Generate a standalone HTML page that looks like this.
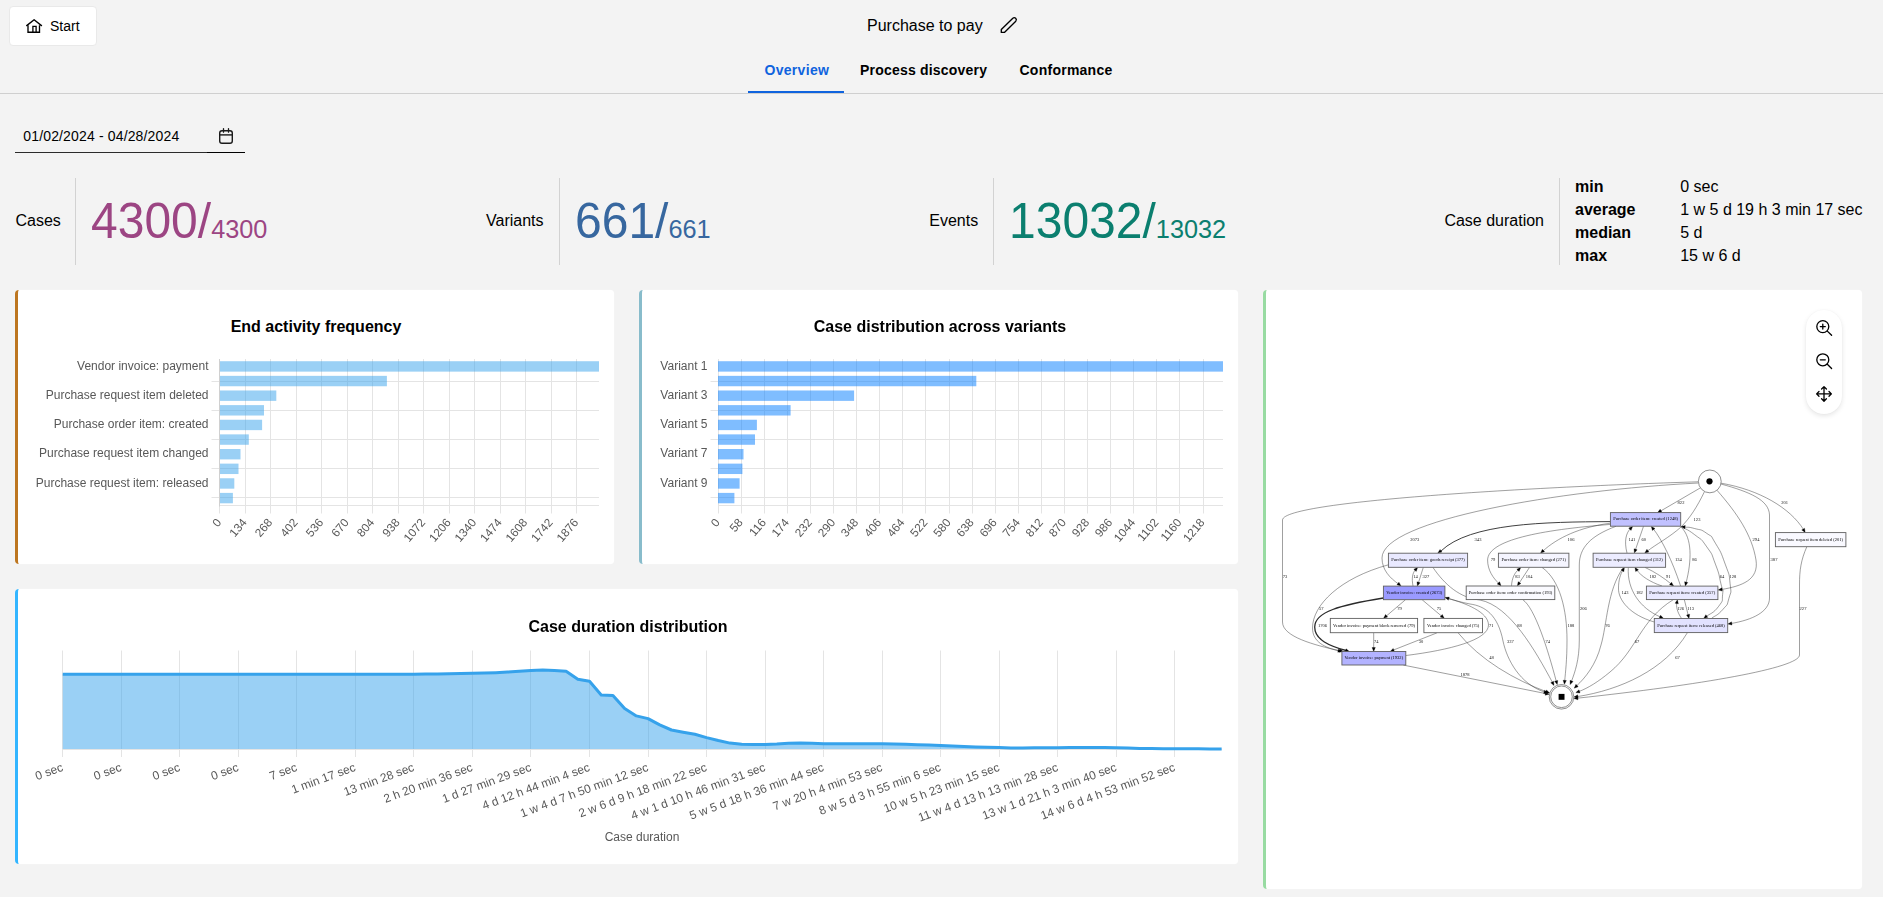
<!DOCTYPE html>
<html lang="en"><head><meta charset="utf-8"><title>Purchase to pay</title><style>
*{box-sizing:border-box;margin:0;padding:0}
html,body{width:1883px;height:897px;overflow:hidden;background:#f3f3f3;font-family:"Liberation Sans",sans-serif;color:#000}
.abs{position:absolute}
.t{position:absolute;white-space:nowrap;line-height:1}
.card{position:absolute;background:#fff;border-radius:4px;border-left:3px solid #000;box-shadow:0 0 1px rgba(255,255,255,.9)}
svg{position:absolute;left:0;top:0;overflow:visible}
.cv{will-change:transform}
svg text{font-family:"Liberation Sans",sans-serif}
svg.gr text{font-family:"Liberation Serif",serif}
</style></head><body>
<div class="abs" style="left:9px;top:6px;width:88px;height:40px;background:#fff;border:1px solid #e9e9e9;border-radius:4px"></div>
<svg width="16" height="16" viewBox="0 0 16 16" style="left:26px;top:18px" fill="none" stroke="#000" stroke-width="1.35" stroke-linecap="round" stroke-linejoin="round"><path d="M0.7 7.6 8.1 1.7 15.5 7.6"/><path d="M2 7.2V14.2H13.5V7.2" stroke-linecap="butt" stroke-linejoin="miter"/><path d="M6.9 14.2V8.4H10.1V14.2" stroke-linecap="butt" stroke-linejoin="miter" stroke-width="1.3"/></svg>
<div class="t" style="left:50px;top:19px;font-size:14px;font-weight:normal;color:#000;">Start</div>
<div class="t" style="left:867px;top:18px;font-size:16px;font-weight:normal;color:#000;">Purchase to pay</div>
<svg width="20" height="20" viewBox="0 0 20 20" style="left:1000px;top:15px" fill="none" stroke="#000" stroke-width="1.35" stroke-linejoin="round"><path d="M1.3 17.4V14.6L12.82 3.22A2.1 2.1 0 0 1 15.78 6.18L4.4 17.4Z"/></svg>
<div class="t" style="left:764.5px;top:63px;font-size:14px;font-weight:bold;color:#0f63de;letter-spacing:0.3px;">Overview</div>
<div class="t" style="left:860px;top:63px;font-size:14px;font-weight:bold;color:#000;letter-spacing:0.2px;">Process discovery</div>
<div class="t" style="left:1019.5px;top:63px;font-size:14px;font-weight:bold;color:#000;letter-spacing:0.25px;">Conformance</div>
<div class="abs" style="left:0;top:93px;width:1883px;height:1px;background:#cfcfcf"></div>
<div class="abs" style="left:748px;top:91px;width:96px;height:2px;background:#0f63de"></div>
<div class="t" style="left:23.3px;top:129px;font-size:14px;font-weight:normal;color:#000;letter-spacing:0.15px;">01/02/2024 - 04/28/2024</div>
<div class="abs" style="left:15px;top:152px;width:192px;height:1px;background:#2b2b2b"></div>
<div class="abs" style="left:207px;top:152px;width:38px;height:1px;background:#000"></div>
<svg width="20" height="20" viewBox="0 0 20 20" style="left:216px;top:126px" fill="none" stroke="#1a1a1a" stroke-width="1.4"><rect x="3.7" y="4.7" width="12.6" height="12.6" rx="2.3"/><path d="M3.7 8.9H16.300"/><path d="M7.500 2.600V6.200M12.500 2.600V6.200" stroke-linecap="round" stroke-width="1.3"/></svg>
<div class="t" style="left:15.5px;top:213px;font-size:16px;font-weight:normal;color:#000;">Cases</div>
<div class="abs" style="left:75px;top:178px;width:1px;height:87px;background:#d2d2d2"></div>
<div class="t" style="left:91px;top:198px;font-size:48px;font-weight:normal;color:#9c4583;transform:scaleY(1.042);transform-origin:0 40px;">4300/<span style="font-size:25.3px">4300</span></div>
<div class="t" style="left:486px;top:213px;font-size:16px;font-weight:normal;color:#000;">Variants</div>
<div class="abs" style="left:559px;top:178px;width:1px;height:87px;background:#d2d2d2"></div>
<div class="t" style="left:575px;top:198px;font-size:48px;font-weight:normal;color:#37679f;transform:scaleY(1.042);transform-origin:0 40px;">661/<span style="font-size:25.3px">661</span></div>
<div class="t" style="left:929.3px;top:213px;font-size:16px;font-weight:normal;color:#000;">Events</div>
<div class="abs" style="left:993px;top:178px;width:1px;height:87px;background:#d2d2d2"></div>
<div class="t" style="left:1009px;top:198px;font-size:48px;font-weight:normal;color:#0b7f6f;transform:scaleY(1.042);transform-origin:0 40px;">13032/<span style="font-size:25.3px">13032</span></div>
<div class="t" style="left:1444.4px;top:213px;font-size:16px;font-weight:normal;color:#000;">Case duration</div>
<div class="abs" style="left:1559px;top:178px;width:1px;height:87px;background:#d2d2d2"></div>
<div class="t" style="left:1575px;top:179px;font-size:16px;font-weight:bold;color:#000;">min</div>
<div class="t" style="left:1680.2px;top:179px;font-size:16px;font-weight:normal;color:#000;">0 sec</div>
<div class="t" style="left:1575px;top:202px;font-size:16px;font-weight:bold;color:#000;">average</div>
<div class="t" style="left:1680.2px;top:202px;font-size:16px;font-weight:normal;color:#000;">1 w 5 d 19 h 3 min 17 sec</div>
<div class="t" style="left:1575px;top:225px;font-size:16px;font-weight:bold;color:#000;">median</div>
<div class="t" style="left:1680.2px;top:225px;font-size:16px;font-weight:normal;color:#000;">5 d</div>
<div class="t" style="left:1575px;top:248px;font-size:16px;font-weight:bold;color:#000;">max</div>
<div class="t" style="left:1680.2px;top:248px;font-size:16px;font-weight:normal;color:#000;">15 w 6 d</div>
<div class="card" style="left:15px;top:290px;width:599px;height:274px;border-left-color:#bd7620"></div>
<div class="card" style="left:639px;top:290px;width:599px;height:274px;border-left-color:#88bccb"></div>
<div class="card" style="left:1263px;top:290px;width:599px;height:599px;border-left-color:#98dba2"></div>
<div class="card" style="left:15px;top:589px;width:1223px;height:275px;border-left-color:#33b5ff"></div>
<div class="t" style="left:316px;top:319px;font-size:16px;font-weight:bold;color:#000;transform:translateX(-50%);">End activity frequency</div>
<svg class="cv" width="1883" height="897" viewBox="0 0 1883 897">
<path d="M219.5 359V513.5M245.5 359V513.5M270.5 359V513.5M296.5 359V513.5M321.5 359V513.5M347.5 359V513.5M372.5 359V513.5M398.5 359V513.5M423.5 359V513.5M449.5 359V513.5M474.5 359V513.5M500.5 359V513.5M525.5 359V513.5M551.5 359V513.5M576.5 359V513.5" stroke="#e4e4e4" stroke-width="1" fill="none"/>
<path d="M211.5 381.5H599M211.5 410.5H599M211.5 439.5H599M211.5 468.5H599M211.5 497.5H599M219 505.5H599" stroke="#e4e4e4" stroke-width="1" fill="none"/>
<path d="M219.5 359V506.5" stroke="#d0d0d0" stroke-width="1" fill="none"/>
<rect x="220" y="361.22" width="379" height="10.4" fill="rgba(54,162,235,0.5)"/>
<rect x="220" y="375.85" width="166.9" height="10.4" fill="rgba(54,162,235,0.5)"/>
<rect x="220" y="390.48" width="56.3" height="10.4" fill="rgba(54,162,235,0.5)"/>
<rect x="220" y="405.11" width="44" height="10.4" fill="rgba(54,162,235,0.5)"/>
<rect x="220" y="419.74" width="42.1" height="10.4" fill="rgba(54,162,235,0.5)"/>
<rect x="220" y="434.37" width="28.8" height="10.4" fill="rgba(54,162,235,0.5)"/>
<rect x="220" y="449" width="20.5" height="10.4" fill="rgba(54,162,235,0.5)"/>
<rect x="220" y="463.63" width="18.5" height="10.4" fill="rgba(54,162,235,0.5)"/>
<rect x="220" y="478.26" width="14.3" height="10.4" fill="rgba(54,162,235,0.5)"/>
<rect x="220" y="492.89" width="12.9" height="10.4" fill="rgba(54,162,235,0.5)"/>
<text x="208.5" y="370.1" text-anchor="end" font-size="12" fill="#585858">Vendor invoice: payment</text>
<text x="208.5" y="398.8" text-anchor="end" font-size="12" fill="#585858">Purchase request item deleted</text>
<text x="208.5" y="427.9" text-anchor="end" font-size="12" fill="#585858">Purchase order item: created</text>
<text x="208.5" y="456.8" text-anchor="end" font-size="12" fill="#585858">Purchase request item changed</text>
<text x="208.5" y="486.5" text-anchor="end" font-size="12" fill="#585858">Purchase request item: released</text>
<text transform="translate(221.9 522.6) rotate(-50)" text-anchor="end" font-size="11.8" fill="#585858">0</text>
<text transform="translate(247.4 522.6) rotate(-50)" text-anchor="end" font-size="11.8" fill="#585858">134</text>
<text transform="translate(272.9 522.6) rotate(-50)" text-anchor="end" font-size="11.8" fill="#585858">268</text>
<text transform="translate(298.4 522.6) rotate(-50)" text-anchor="end" font-size="11.8" fill="#585858">402</text>
<text transform="translate(323.9 522.6) rotate(-50)" text-anchor="end" font-size="11.8" fill="#585858">536</text>
<text transform="translate(349.4 522.6) rotate(-50)" text-anchor="end" font-size="11.8" fill="#585858">670</text>
<text transform="translate(374.9 522.6) rotate(-50)" text-anchor="end" font-size="11.8" fill="#585858">804</text>
<text transform="translate(400.4 522.6) rotate(-50)" text-anchor="end" font-size="11.8" fill="#585858">938</text>
<text transform="translate(425.9 522.6) rotate(-50)" text-anchor="end" font-size="11.8" fill="#585858">1072</text>
<text transform="translate(451.4 522.6) rotate(-50)" text-anchor="end" font-size="11.8" fill="#585858">1206</text>
<text transform="translate(476.9 522.6) rotate(-50)" text-anchor="end" font-size="11.8" fill="#585858">1340</text>
<text transform="translate(502.4 522.6) rotate(-50)" text-anchor="end" font-size="11.8" fill="#585858">1474</text>
<text transform="translate(527.9 522.6) rotate(-50)" text-anchor="end" font-size="11.8" fill="#585858">1608</text>
<text transform="translate(553.4 522.6) rotate(-50)" text-anchor="end" font-size="11.8" fill="#585858">1742</text>
<text transform="translate(578.9 522.6) rotate(-50)" text-anchor="end" font-size="11.8" fill="#585858">1876</text>
</svg>
<div class="t" style="left:940px;top:319px;font-size:16px;font-weight:bold;color:#000;transform:translateX(-50%);">Case distribution across variants</div>
<svg class="cv" width="1883" height="897" viewBox="0 0 1883 897">
<path d="M718.5 359V513.5M741.5 359V513.5M764.5 359V513.5M787.5 359V513.5M810.5 359V513.5M833.5 359V513.5M856.5 359V513.5M879.5 359V513.5M902.5 359V513.5M925.5 359V513.5M949.5 359V513.5M972.5 359V513.5M995.5 359V513.5M1018.5 359V513.5M1041.5 359V513.5M1064.5 359V513.5M1087.5 359V513.5M1110.5 359V513.5M1133.5 359V513.5M1156.5 359V513.5M1179.5 359V513.5M1203.5 359V513.5" stroke="#e4e4e4" stroke-width="1" fill="none"/>
<path d="M710.5 381.5H1223M710.5 410.5H1223M710.5 439.5H1223M710.5 468.5H1223M710.5 497.5H1223M718 505.5H1223" stroke="#e4e4e4" stroke-width="1" fill="none"/>
<path d="M718.5 359V506.5" stroke="#e4e4e4" stroke-width="1" fill="none"/>
<rect x="718" y="361.22" width="505" height="10.4" fill="rgba(0,123,255,0.5)"/>
<rect x="718" y="375.85" width="258.3" height="10.4" fill="rgba(0,123,255,0.5)"/>
<rect x="718" y="390.48" width="136.1" height="10.4" fill="rgba(0,123,255,0.5)"/>
<rect x="718" y="405.11" width="72.6" height="10.4" fill="rgba(0,123,255,0.5)"/>
<rect x="718" y="419.74" width="38.9" height="10.4" fill="rgba(0,123,255,0.5)"/>
<rect x="718" y="434.37" width="37" height="10.4" fill="rgba(0,123,255,0.5)"/>
<rect x="718" y="449" width="25.5" height="10.4" fill="rgba(0,123,255,0.5)"/>
<rect x="718" y="463.63" width="24.4" height="10.4" fill="rgba(0,123,255,0.5)"/>
<rect x="718" y="478.26" width="21.6" height="10.4" fill="rgba(0,123,255,0.5)"/>
<rect x="718" y="492.89" width="16.4" height="10.4" fill="rgba(0,123,255,0.5)"/>
<text x="707.5" y="370.1" text-anchor="end" font-size="12" fill="#585858">Variant 1</text>
<text x="707.5" y="398.8" text-anchor="end" font-size="12" fill="#585858">Variant 3</text>
<text x="707.5" y="427.9" text-anchor="end" font-size="12" fill="#585858">Variant 5</text>
<text x="707.5" y="456.8" text-anchor="end" font-size="12" fill="#585858">Variant 7</text>
<text x="707.5" y="486.5" text-anchor="end" font-size="12" fill="#585858">Variant 9</text>
<text transform="translate(720.45 522.6) rotate(-50)" text-anchor="end" font-size="11.8" fill="#585858">0</text>
<text transform="translate(743.54 522.6) rotate(-50)" text-anchor="end" font-size="11.8" fill="#585858">58</text>
<text transform="translate(766.63 522.6) rotate(-50)" text-anchor="end" font-size="11.8" fill="#585858">116</text>
<text transform="translate(789.72 522.6) rotate(-50)" text-anchor="end" font-size="11.8" fill="#585858">174</text>
<text transform="translate(812.81 522.6) rotate(-50)" text-anchor="end" font-size="11.8" fill="#585858">232</text>
<text transform="translate(835.9 522.6) rotate(-50)" text-anchor="end" font-size="11.8" fill="#585858">290</text>
<text transform="translate(858.99 522.6) rotate(-50)" text-anchor="end" font-size="11.8" fill="#585858">348</text>
<text transform="translate(882.08 522.6) rotate(-50)" text-anchor="end" font-size="11.8" fill="#585858">406</text>
<text transform="translate(905.17 522.6) rotate(-50)" text-anchor="end" font-size="11.8" fill="#585858">464</text>
<text transform="translate(928.26 522.6) rotate(-50)" text-anchor="end" font-size="11.8" fill="#585858">522</text>
<text transform="translate(951.35 522.6) rotate(-50)" text-anchor="end" font-size="11.8" fill="#585858">580</text>
<text transform="translate(974.44 522.6) rotate(-50)" text-anchor="end" font-size="11.8" fill="#585858">638</text>
<text transform="translate(997.53 522.6) rotate(-50)" text-anchor="end" font-size="11.8" fill="#585858">696</text>
<text transform="translate(1020.62 522.6) rotate(-50)" text-anchor="end" font-size="11.8" fill="#585858">754</text>
<text transform="translate(1043.71 522.6) rotate(-50)" text-anchor="end" font-size="11.8" fill="#585858">812</text>
<text transform="translate(1066.8 522.6) rotate(-50)" text-anchor="end" font-size="11.8" fill="#585858">870</text>
<text transform="translate(1089.89 522.6) rotate(-50)" text-anchor="end" font-size="11.8" fill="#585858">928</text>
<text transform="translate(1112.98 522.6) rotate(-50)" text-anchor="end" font-size="11.8" fill="#585858">986</text>
<text transform="translate(1136.07 522.6) rotate(-50)" text-anchor="end" font-size="11.8" fill="#585858">1044</text>
<text transform="translate(1159.16 522.6) rotate(-50)" text-anchor="end" font-size="11.8" fill="#585858">1102</text>
<text transform="translate(1182.25 522.6) rotate(-50)" text-anchor="end" font-size="11.8" fill="#585858">1160</text>
<text transform="translate(1205.34 522.6) rotate(-50)" text-anchor="end" font-size="11.8" fill="#585858">1218</text>
</svg>
<div class="t" style="left:628px;top:619px;font-size:16px;font-weight:bold;color:#000;transform:translateX(-50%);">Case duration distribution</div>
<svg class="cv" width="1883" height="897" viewBox="0 0 1883 897">
<path d="M62.5 650.5V757M121.5 650.5V757M179.5 650.5V757M238.5 650.5V757M296.5 650.5V757M355.5 650.5V757M413.5 650.5V757M472.5 650.5V757M530.5 650.5V757M589.5 650.5V757M648.5 650.5V757M706.5 650.5V757M765.5 650.5V757M823.5 650.5V757M882.5 650.5V757M940.5 650.5V757M999.5 650.5V757M1057.5 650.5V757M1116.5 650.5V757M1174.5 650.5V757" stroke="#e4e4e4" stroke-width="1" fill="none"/>
<path d="M62 749.5H1221.65" stroke="#e4e4e4" stroke-width="1" fill="none"/>
<path d="M62.75 674.3 L74.46 674.3 L86.16 674.3 L97.87 674.3 L109.57 674.3 L121.28 674.3 L132.99 674.3 L144.69 674.3 L156.4 674.3 L168.1 674.3 L179.81 674.3 L191.52 674.3 L203.22 674.3 L214.93 674.3 L226.63 674.3 L238.34 674.3 L250.05 674.3 L261.75 674.3 L273.46 674.3 L285.17 674.3 L296.87 674.3 L308.58 674.3 L320.28 674.3 L331.99 674.3 L343.7 674.3 L355.4 674.3 L367.11 674.3 L378.81 674.3 L390.52 674.3 L402.23 674.3 L413.93 674.2 L425.64 674.1 L437.34 674 L449.05 673.8 L460.76 673.6 L472.46 673.3 L484.17 673.1 L495.87 672.7 L507.58 672.05 L519.29 671.3 L530.99 670.4 L542.7 669.9 L554.4 670.5 L566.11 671.3 L577.82 679.3 L589.52 681.2 L601.23 695 L612.93 695.4 L624.64 708.6 L636.35 715.9 L648.05 718.6 L659.76 724.9 L671.47 730 L683.17 732.2 L694.88 734.2 L706.58 737.6 L718.29 740.5 L730 743.1 L741.7 744.2 L753.41 744.4 L765.11 744.5 L776.82 744 L788.53 743.2 L800.23 743 L811.94 743.3 L823.64 743.7 L835.35 743.8 L847.06 743.8 L858.76 743.75 L870.47 743.7 L882.17 743.7 L893.88 744 L905.59 744.3 L917.29 744.7 L929 745.1 L940.7 745.5 L952.41 746 L964.12 746.5 L975.82 747 L987.53 747.3 L999.23 747.6 L1010.94 747.9 L1022.65 747.9 L1034.35 747.85 L1046.06 747.8 L1057.77 747.75 L1069.47 747.55 L1081.18 747.4 L1092.88 747.4 L1104.59 747.5 L1116.3 747.75 L1128 748.1 L1139.71 748.45 L1151.41 748.6 L1163.12 748.65 L1174.83 748.7 L1186.53 748.8 L1198.24 748.85 L1209.94 748.9 L1221.65 748.9 L1221.65 749 L62.75 749 Z" fill="rgba(54,162,235,0.5)" stroke="none"/>
<path d="M62.75 674.3 L74.46 674.3 L86.16 674.3 L97.87 674.3 L109.57 674.3 L121.28 674.3 L132.99 674.3 L144.69 674.3 L156.4 674.3 L168.1 674.3 L179.81 674.3 L191.52 674.3 L203.22 674.3 L214.93 674.3 L226.63 674.3 L238.34 674.3 L250.05 674.3 L261.75 674.3 L273.46 674.3 L285.17 674.3 L296.87 674.3 L308.58 674.3 L320.28 674.3 L331.99 674.3 L343.7 674.3 L355.4 674.3 L367.11 674.3 L378.81 674.3 L390.52 674.3 L402.23 674.3 L413.93 674.2 L425.64 674.1 L437.34 674 L449.05 673.8 L460.76 673.6 L472.46 673.3 L484.17 673.1 L495.87 672.7 L507.58 672.05 L519.29 671.3 L530.99 670.4 L542.7 669.9 L554.4 670.5 L566.11 671.3 L577.82 679.3 L589.52 681.2 L601.23 695 L612.93 695.4 L624.64 708.6 L636.35 715.9 L648.05 718.6 L659.76 724.9 L671.47 730 L683.17 732.2 L694.88 734.2 L706.58 737.6 L718.29 740.5 L730 743.1 L741.7 744.2 L753.41 744.4 L765.11 744.5 L776.82 744 L788.53 743.2 L800.23 743 L811.94 743.3 L823.64 743.7 L835.35 743.8 L847.06 743.8 L858.76 743.75 L870.47 743.7 L882.17 743.7 L893.88 744 L905.59 744.3 L917.29 744.7 L929 745.1 L940.7 745.5 L952.41 746 L964.12 746.5 L975.82 747 L987.53 747.3 L999.23 747.6 L1010.94 747.9 L1022.65 747.9 L1034.35 747.85 L1046.06 747.8 L1057.77 747.75 L1069.47 747.55 L1081.18 747.4 L1092.88 747.4 L1104.59 747.5 L1116.3 747.75 L1128 748.1 L1139.71 748.45 L1151.41 748.6 L1163.12 748.65 L1174.83 748.7 L1186.53 748.8 L1198.24 748.85 L1209.94 748.9 L1221.65 748.9" fill="none" stroke="#36a2eb" stroke-width="3" stroke-linejoin="round" stroke-linecap="butt"/>
<text transform="translate(63.75 770.4) rotate(-20.3)" text-anchor="end" font-size="11.9" fill="#585858">0 sec</text>
<text transform="translate(122.28 770.4) rotate(-20.3)" text-anchor="end" font-size="11.9" fill="#585858">0 sec</text>
<text transform="translate(180.81 770.4) rotate(-20.3)" text-anchor="end" font-size="11.9" fill="#585858">0 sec</text>
<text transform="translate(239.34 770.4) rotate(-20.3)" text-anchor="end" font-size="11.9" fill="#585858">0 sec</text>
<text transform="translate(297.87 770.4) rotate(-20.3)" text-anchor="end" font-size="11.9" fill="#585858">7 sec</text>
<text transform="translate(356.4 770.4) rotate(-20.3)" text-anchor="end" font-size="11.9" fill="#585858">1 min 17 sec</text>
<text transform="translate(414.93 770.4) rotate(-20.3)" text-anchor="end" font-size="11.9" fill="#585858">13 min 28 sec</text>
<text transform="translate(473.46 770.4) rotate(-20.3)" text-anchor="end" font-size="11.9" fill="#585858">2 h 20 min 36 sec</text>
<text transform="translate(531.99 770.4) rotate(-20.3)" text-anchor="end" font-size="11.9" fill="#585858">1 d 27 min 29 sec</text>
<text transform="translate(590.52 770.4) rotate(-20.3)" text-anchor="end" font-size="11.9" fill="#585858">4 d 12 h 44 min 4 sec</text>
<text transform="translate(649.05 770.4) rotate(-20.3)" text-anchor="end" font-size="11.9" fill="#585858">1 w 4 d 7 h 50 min 12 sec</text>
<text transform="translate(707.58 770.4) rotate(-20.3)" text-anchor="end" font-size="11.9" fill="#585858">2 w 6 d 9 h 18 min 22 sec</text>
<text transform="translate(766.11 770.4) rotate(-20.3)" text-anchor="end" font-size="11.9" fill="#585858">4 w 1 d 10 h 46 min 31 sec</text>
<text transform="translate(824.64 770.4) rotate(-20.3)" text-anchor="end" font-size="11.9" fill="#585858">5 w 5 d 18 h 36 min 44 sec</text>
<text transform="translate(883.17 770.4) rotate(-20.3)" text-anchor="end" font-size="11.9" fill="#585858">7 w 20 h 4 min 53 sec</text>
<text transform="translate(941.7 770.4) rotate(-20.3)" text-anchor="end" font-size="11.9" fill="#585858">8 w 5 d 3 h 55 min 6 sec</text>
<text transform="translate(1000.23 770.4) rotate(-20.3)" text-anchor="end" font-size="11.9" fill="#585858">10 w 5 h 23 min 15 sec</text>
<text transform="translate(1058.77 770.4) rotate(-20.3)" text-anchor="end" font-size="11.9" fill="#585858">11 w 4 d 13 h 13 min 28 sec</text>
<text transform="translate(1117.3 770.4) rotate(-20.3)" text-anchor="end" font-size="11.9" fill="#585858">13 w 1 d 21 h 3 min 40 sec</text>
<text transform="translate(1175.83 770.4) rotate(-20.3)" text-anchor="end" font-size="11.9" fill="#585858">14 w 6 d 4 h 53 min 52 sec</text>
<text x="642" y="841" text-anchor="middle" font-size="12" fill="#585858">Case duration</text>
</svg>
<svg class="cv gr" width="1883" height="897" viewBox="0 0 1883 897">
<path d="M1700.5 487.8 L1661 510.8" fill="none" stroke="#2a2a2a" stroke-width="0.45"/>
<path d="M1704.5 491.6 C1697 507 1690 518 1681 527 C1670 537 1655 545 1647.5 551" fill="none" stroke="#2a2a2a" stroke-width="0.45"/>
<path d="M1717 490.3 C1737 513 1752 535 1756 560 C1759 580 1742 586 1721.5 589.5" fill="none" stroke="#2a2a2a" stroke-width="0.45"/>
<path d="M1721 484 C1750 492 1769 500 1769.5 515 L1769.5 598 C1769.500 612 1752 620 1731 623.500" fill="none" stroke="#2a2a2a" stroke-width="0.45"/>
<path d="M1721.2 483.2 C1760 490 1790 508 1803.5 529.5" fill="none" stroke="#2a2a2a" stroke-width="0.45"/>
<path d="M1698.4 483 C1560 490 1382 520 1382 558 C1382 570 1390 578 1398.5 584" fill="none" stroke="#2a2a2a" stroke-width="0.45"/>
<path d="M1698.3 481.8 C1560 486 1282.5 500 1282.5 520 L1282.5 622 C1282.500 637 1315 645 1338.500 650.600" fill="none" stroke="#2a2a2a" stroke-width="0.45"/>
<path d="M1610.4 521.6 C1545 522 1470 523 1441 551" fill="none" stroke="#2a2a2a" stroke-width="0.9"/>
<path d="M1610.4 523.2 C1580 527 1557 538 1543 551" fill="none" stroke="#2a2a2a" stroke-width="0.45"/>
<path d="M1610.4 524.4 C1540 530 1488 540 1487.6 560 C1487.600 570 1493 578 1499 583.600" fill="none" stroke="#2a2a2a" stroke-width="0.45"/>
<path d="M1616 526.3 C1590 536 1579.300 548 1579.300 565 L1579.300 640 C1579.300 660 1575 672 1571.400 681.500" fill="none" stroke="#2a2a2a" stroke-width="0.45"/>
<path d="M1627 553.1 C1624 541 1626 533 1630.5 528.6" fill="none" stroke="#2a2a2a" stroke-width="0.45"/>
<path d="M1643.5 526.3 L1635.3 550.2" fill="none" stroke="#2a2a2a" stroke-width="0.45"/>
<path d="M1680.6 586 C1672 560 1662 540 1653.3 528.8" fill="none" stroke="#2a2a2a" stroke-width="0.45"/>
<path d="M1681.5 527.5 C1692 538 1692 560 1686 583" fill="none" stroke="#2a2a2a" stroke-width="0.45"/>
<path d="M1680.6 526.7 C1685.23 529.33 1685.77 527.87 1694.5 534.6 C1703.23 541.33 1699.83 537.07 1706.8 546.9 C1713.77 556.73 1710.7 551.83 1715.4 564.1 C1720.1 576.37 1718.5 573.57 1720.9 583.7 C1723.3 593.83 1723.4 586.9 1722.6 594.5 C1721.8 602.1 1723.97 599.13 1718.5 606.5 C1713.03 613.87 1710.3 613.23 1706.2 616.6" fill="none" stroke="#2a2a2a" stroke-width="0.45"/>
<path d="M1711.7 618.2 C1715.4 615.3 1717.07 616.1 1722.8 609.5 C1728.53 602.9 1726.47 607 1728.9 598.4 C1731.33 589.8 1731.33 595.13 1730.1 583.7 C1728.87 572.27 1730.1 577.6 1725.2 564.1 C1720.3 550.6 1721.53 553.43 1715.4 543.2 C1709.27 532.97 1713.77 538.3 1706.8 533.4 C1699.83 528.5 1701.93 530.57 1694.5 528.5 C1687.07 526.43 1687.83 527.63 1684.5 527.2" fill="none" stroke="#2a2a2a" stroke-width="0.45"/>
<path d="M1413 586 C1411.500 578 1412.500 573 1415.600 569.500" fill="none" stroke="#2a2a2a" stroke-width="0.45"/>
<path d="M1423.3 567.4 L1418.3 583.2" fill="none" stroke="#2a2a2a" stroke-width="0.45"/>
<path d="M1388.4 564.8 C1340 578 1312.5 605 1312.5 628 C1312.500 642 1325 648 1340 650.900" fill="none" stroke="#2a2a2a" stroke-width="0.45"/>
<path d="M1432.9 567.4 C1445 585 1460 598 1480 600 C1510 606 1535 650 1552.500 682.500" fill="none" stroke="#2a2a2a" stroke-width="0.45"/>
<path d="M1511.5 585.800 C1512 578 1514.500 573 1518.500 569.600" fill="none" stroke="#2a2a2a" stroke-width="0.45"/>
<path d="M1529.5 567.400 L1519 583.300" fill="none" stroke="#2a2a2a" stroke-width="0.45"/>
<path d="M1542 567.400 C1560 580 1567 610 1567 640 C1567 660 1565.500 672 1564.700 681" fill="none" stroke="#2a2a2a" stroke-width="0.45"/>
<path d="M1522.700 599.600 C1535 608 1548 650 1556.300 681.400" fill="none" stroke="#2a2a2a" stroke-width="0.45"/>
<path d="M1383.4 598 C1340 605 1314.700 612 1314.700 627 C1314.700 640 1330 646 1346 650.500" fill="none" stroke="#2a2a2a" stroke-width="1.3"/>
<path d="M1405.4 599.8 L1386 616.3" fill="none" stroke="#2a2a2a" stroke-width="0.45"/>
<path d="M1422.2 599.8 L1441.8 616.3" fill="none" stroke="#2a2a2a" stroke-width="0.45"/>
<path d="M1544.5 692 C1520 684 1507 660 1503 641 C1498 615 1485 606 1470 604 C1462 602.500 1453 600 1445 597.400" fill="none" stroke="#2a2a2a" stroke-width="0.45"/>
<path d="M1373.7 632.9 L1373.7 648.4" fill="none" stroke="#2a2a2a" stroke-width="0.45"/>
<path d="M1436.9 632.9 L1393 650.2" fill="none" stroke="#2a2a2a" stroke-width="0.45"/>
<path d="M1458 632.700 C1480 660 1515 680 1546.600 691.800" fill="none" stroke="#2a2a2a" stroke-width="0.45"/>
<path d="M1403.4 665.1 L1545.8 693.6" fill="none" stroke="#2a2a2a" stroke-width="0.45"/>
<path d="M1406 655.500 C1450 650 1488.500 640 1488.500 625 C1488.500 612 1465 603 1448.300 598.500" fill="none" stroke="#2a2a2a" stroke-width="0.45"/>
<path d="M1662 586 C1650 582 1641 576 1636.600 569.800" fill="none" stroke="#2a2a2a" stroke-width="0.45"/>
<path d="M1645 567.400 C1655 572 1664 578 1671.200 584" fill="none" stroke="#2a2a2a" stroke-width="0.45"/>
<path d="M1654.300 622 C1630 615 1618 600 1618.500 588 C1618.500 580 1620.500 574 1623 570" fill="none" stroke="#2a2a2a" stroke-width="0.45"/>
<path d="M1628.300 567.400 C1627 590 1640 608 1660 616.800" fill="none" stroke="#2a2a2a" stroke-width="0.45"/>
<path d="M1623.400 567.500 C1607 590 1607 625 1601 645 C1596 665 1585 678 1576.500 686" fill="none" stroke="#2a2a2a" stroke-width="0.45"/>
<path d="M1681.500 618.400 C1677 612 1676 606 1676.800 602.500" fill="none" stroke="#2a2a2a" stroke-width="0.45"/>
<path d="M1684.300 599.600 L1688.300 615.500" fill="none" stroke="#2a2a2a" stroke-width="0.45"/>
<path d="M1673.400 599.600 C1640 620 1637 650 1610 672 C1598 682 1588 688 1579 691.500" fill="none" stroke="#2a2a2a" stroke-width="0.45"/>
<path d="M1687.400 632.700 C1665 670 1620 690 1577.300 696.600" fill="none" stroke="#2a2a2a" stroke-width="0.45"/>
<path d="M1806.800 546.800 C1801 560 1799.500 570 1799.500 585 L1799.500 655 C1799.500 668 1700 685 1577.300 698.200" fill="none" stroke="#2a2a2a" stroke-width="0.45"/>
<path d="M1657.6 512.6L1660.15 509.22L1661.8 512.08ZM1644.8 553L1646.92 549.34L1648.91 551.97ZM1718.2 590L1721.83 587.82L1722.29 591.09ZM1727.9 624L1731.53 621.82L1731.99 625.09ZM1805.2 532.4L1801.73 529.97L1804.53 528.22ZM1401 585.9L1396.91 584.8L1398.94 582.2ZM1341.9 651.4L1337.73 652.13L1338.47 648.91ZM1437.8 553L1440.05 549.41L1441.94 552.11ZM1540.6 553.1L1542.39 549.26L1544.6 551.72ZM1501 585.8L1497.16 584.01L1499.62 581.8ZM1570.2 684.6L1569.98 680.37L1573.08 681.5ZM1632.6 526.5L1631.01 530.42L1628.68 528.09ZM1634.4 553L1634.04 548.78L1637.17 549.8ZM1651.3 526.4L1655 528.46L1652.4 530.49ZM1685.3 585.9L1684.57 581.73L1687.79 582.47ZM1703.7 618.4L1705.82 614.74L1707.81 617.37ZM1681.2 526.6L1685.29 525.51L1684.83 528.78ZM1417.6 567.5L1416.22 571.5L1413.76 569.29ZM1417.4 586L1416.96 581.79L1420.12 582.75ZM1343.4 651.5L1339.24 652.3L1339.93 649.08ZM1554 685.5L1550.71 682.83L1553.63 681.28ZM1520.7 567.6L1519.11 571.52L1516.78 569.19ZM1517.4 585.8L1518.14 581.63L1520.91 583.43ZM1564.4 684.3L1563.1 680.27L1566.38 680.56ZM1557.2 684.6L1554.6 681.26L1557.78 680.41ZM1349.4 651.5L1345.2 652.01L1346.11 648.84ZM1383.6 618.2L1385.53 614.43L1387.65 616.96ZM1444.2 618.2L1440.15 616.96L1442.27 614.43ZM1547.8 693.1L1543.58 693.46L1544.6 690.33ZM1373.7 651.4L1372.05 647.5L1375.35 647.5ZM1390.2 651.4L1393.2 648.41L1394.43 651.47ZM1549.6 692.9L1545.37 693.12L1546.5 690.02ZM1549.2 694.3L1545.06 695.18L1545.69 691.94ZM1445.1 597.5L1449.31 597.06L1448.35 600.22ZM1635 567.4L1638.47 569.83L1635.67 571.58ZM1673.6 585.9L1669.51 584.8L1671.54 582.2ZM1624.4 567.5L1623.88 571.7L1621.02 570.05ZM1663.4 618.3L1659.17 618.15L1660.56 615.16ZM1574.2 688.2L1575.93 684.33L1578.18 686.75ZM1677.4 599.7L1678.35 603.83L1675.1 603.25ZM1689 618.4L1686.46 615.02L1689.66 614.22ZM1575.8 692.6L1579 689.83L1580.02 692.96ZM1574 697L1577.63 694.82L1578.09 698.09ZM1574 698.6L1577.71 696.55L1578.05 699.83Z" fill="#000" stroke="#000" stroke-width="0.3"/>
<text transform="translate(1681 503.8) scale(.1)" text-anchor="middle" font-size="45.3" fill="#111">822</text>
<text transform="translate(1697 520.6) scale(.1)" text-anchor="middle" font-size="45.3" fill="#111">123</text>
<text transform="translate(1756 540.9) scale(.1)" text-anchor="middle" font-size="45.3" fill="#111">294</text>
<text transform="translate(1774 561) scale(.1)" text-anchor="middle" font-size="45.3" fill="#111">387</text>
<text transform="translate(1784.7 503.8) scale(.1)" text-anchor="middle" font-size="45.3" fill="#111">201</text>
<text transform="translate(1414.8 540.9) scale(.1)" text-anchor="middle" font-size="45.3" fill="#111">2073</text>
<text transform="translate(1285 577.7) scale(.1)" text-anchor="middle" font-size="45.3" fill="#111">73</text>
<text transform="translate(1478 540.9) scale(.1)" text-anchor="middle" font-size="45.3" fill="#111">343</text>
<text transform="translate(1571 540.9) scale(.1)" text-anchor="middle" font-size="45.3" fill="#111">106</text>
<text transform="translate(1493 561.4) scale(.1)" text-anchor="middle" font-size="45.3" fill="#111">79</text>
<text transform="translate(1583.3 609.6) scale(.1)" text-anchor="middle" font-size="45.3" fill="#111">206</text>
<text transform="translate(1631.8 540.9) scale(.1)" text-anchor="middle" font-size="45.3" fill="#111">141</text>
<text transform="translate(1643.8 540.9) scale(.1)" text-anchor="middle" font-size="45.3" fill="#111">60</text>
<text transform="translate(1678.4 561.4) scale(.1)" text-anchor="middle" font-size="45.3" fill="#111">134</text>
<text transform="translate(1694.4 561.4) scale(.1)" text-anchor="middle" font-size="45.3" fill="#111">86</text>
<text transform="translate(1721.9 577.7) scale(.1)" text-anchor="middle" font-size="45.3" fill="#111">64</text>
<text transform="translate(1732.8 577.7) scale(.1)" text-anchor="middle" font-size="45.3" fill="#111">128</text>
<text transform="translate(1415.4 577.7) scale(.1)" text-anchor="middle" font-size="45.3" fill="#111">14</text>
<text transform="translate(1425.8 577.7) scale(.1)" text-anchor="middle" font-size="45.3" fill="#111">327</text>
<text transform="translate(1321.2 609.6) scale(.1)" text-anchor="middle" font-size="45.3" fill="#111">57</text>
<text transform="translate(1519.6 626.7) scale(.1)" text-anchor="middle" font-size="45.3" fill="#111">88</text>
<text transform="translate(1517.5 577.7) scale(.1)" text-anchor="middle" font-size="45.3" fill="#111">83</text>
<text transform="translate(1529.2 577.7) scale(.1)" text-anchor="middle" font-size="45.3" fill="#111">104</text>
<text transform="translate(1570.8 626.7) scale(.1)" text-anchor="middle" font-size="45.3" fill="#111">188</text>
<text transform="translate(1547.7 643) scale(.1)" text-anchor="middle" font-size="45.3" fill="#111">74</text>
<text transform="translate(1322.5 626.7) scale(.1)" text-anchor="middle" font-size="45.3" fill="#111">1706</text>
<text transform="translate(1399.4 609.6) scale(.1)" text-anchor="middle" font-size="45.3" fill="#111">79</text>
<text transform="translate(1438.9 609.6) scale(.1)" text-anchor="middle" font-size="45.3" fill="#111">75</text>
<text transform="translate(1510.3 643) scale(.1)" text-anchor="middle" font-size="45.3" fill="#111">337</text>
<text transform="translate(1376.3 643) scale(.1)" text-anchor="middle" font-size="45.3" fill="#111">74</text>
<text transform="translate(1421 643) scale(.1)" text-anchor="middle" font-size="45.3" fill="#111">30</text>
<text transform="translate(1491.5 658.6) scale(.1)" text-anchor="middle" font-size="45.3" fill="#111">48</text>
<text transform="translate(1465 675.8) scale(.1)" text-anchor="middle" font-size="45.3" fill="#111">1878</text>
<text transform="translate(1491.2 626.7) scale(.1)" text-anchor="middle" font-size="45.3" fill="#111">71</text>
<text transform="translate(1652.8 577.7) scale(.1)" text-anchor="middle" font-size="45.3" fill="#111">182</text>
<text transform="translate(1668.2 577.7) scale(.1)" text-anchor="middle" font-size="45.3" fill="#111">91</text>
<text transform="translate(1625 593.8) scale(.1)" text-anchor="middle" font-size="45.3" fill="#111">143</text>
<text transform="translate(1639.3 593.8) scale(.1)" text-anchor="middle" font-size="45.3" fill="#111">182</text>
<text transform="translate(1607.4 626.7) scale(.1)" text-anchor="middle" font-size="45.3" fill="#111">76</text>
<text transform="translate(1680.7 609.6) scale(.1)" text-anchor="middle" font-size="45.3" fill="#111">126</text>
<text transform="translate(1690.6 609.6) scale(.1)" text-anchor="middle" font-size="45.3" fill="#111">113</text>
<text transform="translate(1637 643) scale(.1)" text-anchor="middle" font-size="45.3" fill="#111">67</text>
<text transform="translate(1677.6 658.9) scale(.1)" text-anchor="middle" font-size="45.3" fill="#111">67</text>
<text transform="translate(1803 609.6) scale(.1)" text-anchor="middle" font-size="45.3" fill="#111">227</text>
<rect x="1610.4" y="512.6" width="70.3" height="13.6" fill="#c1c1ff" stroke="#606060" stroke-width="0.9"/>
<text transform="translate(1645.55 520.45) scale(.1)" text-anchor="middle" font-size="45.3" fill="#000">Purchase order item: created (1248)</text>
<rect x="1775.4" y="532.6" width="70.5" height="14.1" fill="#f9f9ff" stroke="#606060" stroke-width="0.9"/>
<text transform="translate(1810.65 540.7) scale(.1)" text-anchor="middle" font-size="45.3" fill="#000">Purchase request item deleted (201)</text>
<rect x="1388.4" y="553.2" width="79.2" height="14.1" fill="#e9e9ff" stroke="#606060" stroke-width="0.9"/>
<text transform="translate(1428 561.3) scale(.1)" text-anchor="middle" font-size="45.3" fill="#000">Purchase order item: goods receipt (377)</text>
<rect x="1498.4" y="553.2" width="70.5" height="14.1" fill="#f5f5ff" stroke="#606060" stroke-width="0.9"/>
<text transform="translate(1533.65 561.3) scale(.1)" text-anchor="middle" font-size="45.3" fill="#000">Purchase order item: changed (271)</text>
<rect x="1593.1" y="553.2" width="72.5" height="14.1" fill="#ececff" stroke="#606060" stroke-width="0.9"/>
<text transform="translate(1629.35 561.3) scale(.1)" text-anchor="middle" font-size="45.3" fill="#000">Purchase request item changed (312)</text>
<rect x="1383.4" y="586.1" width="61.5" height="13.6" fill="#9a9aff" stroke="#606060" stroke-width="0.9"/>
<text transform="translate(1414.15 593.95) scale(.1)" text-anchor="middle" font-size="45.3" fill="#000">Vendor invoice: created (2673)</text>
<rect x="1466.2" y="586" width="88.6" height="13.6" fill="#fafaff" stroke="#606060" stroke-width="0.9"/>
<text transform="translate(1510.5 593.85) scale(.1)" text-anchor="middle" font-size="45.3" fill="#000">Purchase order item: order confirmation (193)</text>
<rect x="1646.4" y="586.1" width="71.5" height="13.5" fill="#e9e9ff" stroke="#606060" stroke-width="0.9"/>
<text transform="translate(1682.15 593.9) scale(.1)" text-anchor="middle" font-size="45.3" fill="#000">Purchase request item: created (357)</text>
<rect x="1330.3" y="618.4" width="87.3" height="14.3" fill="#ffffff" stroke="#606060" stroke-width="0.9"/>
<text transform="translate(1373.95 626.6) scale(.1)" text-anchor="middle" font-size="45.3" fill="#000">Vendor invoice: payment block removed (79)</text>
<rect x="1423.9" y="618.4" width="58.6" height="14.3" fill="#ffffff" stroke="#606060" stroke-width="0.9"/>
<text transform="translate(1453.2 626.6) scale(.1)" text-anchor="middle" font-size="45.3" fill="#000">Vendor invoice changed (75)</text>
<rect x="1654.3" y="618.5" width="73.4" height="14.1" fill="#e2e2ff" stroke="#606060" stroke-width="0.9"/>
<text transform="translate(1691 626.6) scale(.1)" text-anchor="middle" font-size="45.3" fill="#000">Purchase request item: released (468)</text>
<rect x="1341.9" y="651.5" width="63.9" height="13.5" fill="#b3b3ff" stroke="#606060" stroke-width="0.9"/>
<text transform="translate(1373.85 659.3) scale(.1)" text-anchor="middle" font-size="45.3" fill="#000">Vendor invoice: payment (1932)</text>
<circle cx="1709.8" cy="481.4" r="11.4" fill="#fff" stroke="#222" stroke-width="0.5"/>
<circle cx="1709.5" cy="481.3" r="3.1" fill="#000"/>
<circle cx="1561.500" cy="696.800" r="12.3" fill="#fff" stroke="#222" stroke-width="0.5"/>
<circle cx="1561.500" cy="696.800" r="10.8" fill="none" stroke="#222" stroke-width="0.5"/>
<rect x="1558.600" y="693.900" width="5.9" height="5.9" fill="#000"/>
</svg>
<div class="abs" style="left:1806px;top:310px;width:36px;height:104px;border-radius:18px;background:#fff;box-shadow:0 2px 5px rgba(0,0,0,.10),0 0 2px rgba(0,0,0,.05)"></div>
<svg width="36" height="104" viewBox="0 0 36 104" style="left:1806px;top:310px" fill="none" stroke="#000" stroke-width="1.3" stroke-linecap="round" stroke-linejoin="round"><circle cx="16.8" cy="16.6" r="6"/><path d="M21.3 21.100 25.600 25.300M14.300 16.600H19.300M16.800 14.100V19.100"/><circle cx="16.8" cy="49.800" r="6"/><path d="M21.3 54.300 25.600 58.500M14.300 49.800H19.300"/><path d="M10.700 83.900H25.300M18 76.600V91.200M13 81.500 10.600 83.900 13 86.300M23 81.500 25.400 83.900 23 86.300M15.600 79 18 76.600 20.400 79M15.600 88.800 18 91.200 20.400 88.800"/></svg>
</body></html>
